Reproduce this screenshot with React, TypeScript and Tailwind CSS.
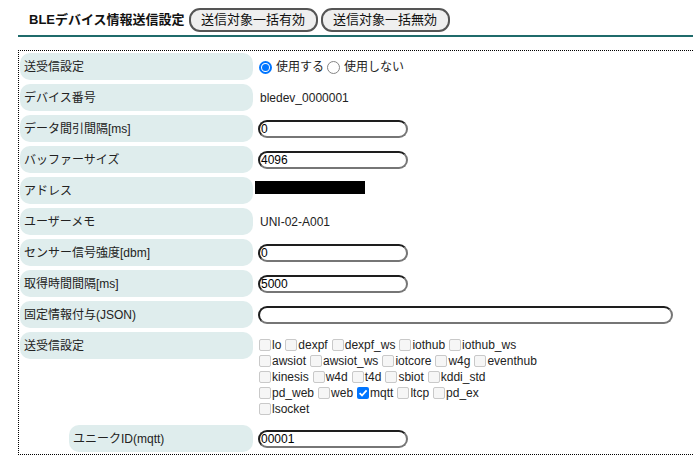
import React from "react"

const font = { fontFamily: '"Liberation Sans", "Noto Sans CJK JP", sans-serif' }

type Row = { label: string; kind: "radio" | "text" | "input" | "mask" | "wide"; value?: string }

const rows: Row[] = [
  { label: "送受信設定", kind: "radio" },
  { label: "デバイス番号", kind: "text", value: "bledev_0000001" },
  { label: "データ間引間隔[ms]", kind: "input", value: "0" },
  { label: "バッファーサイズ", kind: "input", value: "4096" },
  { label: "アドレス", kind: "mask" },
  { label: "ユーザーメモ", kind: "text", value: "UNI-02-A001" },
  { label: "センサー信号強度[dbm]", kind: "input", value: "0" },
  { label: "取得時間間隔[ms]", kind: "input", value: "5000" },
  { label: "固定情報付与(JSON)", kind: "wide", value: "" },
]

const services = [
  ["lo", "dexpf", "dexpf_ws", "iothub", "iothub_ws"],
  ["awsiot", "awsiot_ws", "iotcore", "w4g", "eventhub"],
  ["kinesis", "w4d", "t4d", "sbiot", "kddi_std"],
  ["pd_web", "web", "mqtt", "ltcp", "pd_ex"],
  ["lsocket"],
]

function Pill({ value, wide }: { value: string; wide?: boolean }) {
  return (
    <input
      readOnly
      defaultValue={value}
      className={`ml-[3px] h-[18px] ${wide ? "w-[415px]" : "w-[150px]"} rounded-full border-2 border-t-[#1e1e1e] border-l-[#1e1e1e] border-b-[#767676] border-r-[#767676] bg-white px-[1px] text-[12px] leading-[14px] text-black outline-none`}
      style={font}
    />
  )
}

function Label({ text, indent }: { text: string; indent?: boolean }) {
  return (
    <div
      className={`flex h-[27px] items-center rounded-[10px] bg-[#dfeded] pl-[4px] text-[12px] text-[#222] ${indent ? "ml-[49px]" : ""}`}
    >
      {text}
    </div>
  )
}

function Radio({ on }: { on?: boolean }) {
  return on ? (
    <span className="flex h-[13px] w-[13px] items-center justify-center rounded-full border-2 border-[#0075ff] bg-white">
      <span className="h-[7px] w-[7px] rounded-full bg-[#0075ff]" />
    </span>
  ) : (
    <span className="h-[13px] w-[13px] rounded-full border border-[#858585] bg-white" />
  )
}

function Check({ on }: { on?: boolean }) {
  return on ? (
    <span className="flex h-[12px] w-[12px] items-center justify-center rounded-[2px] bg-[#0075ff]">
      <svg width="10" height="10" viewBox="0 0 10 10">
        <path d="M1.6 5.2 L4 7.5 L8.6 2.4" fill="none" stroke="white" strokeWidth="1.8" />
      </svg>
    </span>
  ) : (
    <span className="h-[12px] w-[12px] rounded-[2px] border border-[#c9c9c9] bg-[#f6f6f6]" />
  )
}

function Value({ row }: { row: Row }) {
  if (row.kind === "radio") {
    return (
      <div className="flex items-center self-start pt-[5px] pl-[4px] text-[12px] text-[#222]">
        <Radio on />
        <span className="ml-[4px] mr-[3px]">使用する</span>
        <Radio />
        <span className="ml-[4px]">使用しない</span>
      </div>
    )
  }
  if (row.kind === "text") {
    return <div className="flex items-center pl-[5px] text-[12px] text-[#222]">{row.value}</div>
  }
  if (row.kind === "mask") {
    return (
      <div className="flex items-start pt-[4px]">
        <div className="h-[13px] w-[110px] bg-black" />
      </div>
    )
  }
  return (
    <div className="flex items-center">
      <Pill value={row.value ?? ""} wide={row.kind === "wide"} />
    </div>
  )
}

export default function App() {
  return (
    <div className="h-[461px] w-[693px] overflow-hidden bg-white text-[#222]" style={font}>
      {/* header */}
      <div className="ml-[18px] flex items-center border-b-2 border-[#1f6b6b] pt-[8px] pb-[3px] pl-[11px]">
        <span className="text-[13px] font-semibold text-[#111]">BLEデバイス情報送信設定</span>
        <button className="ml-[4px] h-[24px] w-[129px] rounded-[11px] border-2 border-[#555] bg-[#efefef] text-[13px] text-[#111]">
          送信対象一括有効
        </button>
        <button className="ml-[3px] h-[24px] w-[129px] rounded-[11px] border-2 border-[#555] bg-[#efefef] text-[13px] text-[#111]">
          送信対象一括無効
        </button>
      </div>

      {/* settings box */}
      <div className="ml-[18px] mt-[13px] border border-r-0 border-dotted border-black pt-[2px] pb-[2px] pl-[1px]">
        <div className="grid grid-cols-[233px_1fr] gap-x-[2px] gap-y-[4px]">
          {rows.map((r, i) => (
            <React.Fragment key={i}>
              <Label text={r.label} />
              <Value row={r} />
            </React.Fragment>
          ))}

          <div className="h-[89px]">
            <Label text="送受信設定" />
          </div>
          <div className="flex flex-col pt-[5px] pl-[4px] text-[12px] text-[#222]">
            {services.map((line, li) => (
              <div key={li} className="flex h-[16px] items-center">
                {line.map((s) => (
                  <span key={s} className="mr-[4px] flex items-center">
                    <Check on={s === "mqtt"} />
                    <span className="ml-[1px]">{s}</span>
                  </span>
                ))}
              </div>
            ))}
          </div>

          <Label text="ユニークID(mqtt)" indent />
          <div className="flex items-center">
            <Pill value="00001" />
          </div>
        </div>
      </div>
    </div>
  )
}
